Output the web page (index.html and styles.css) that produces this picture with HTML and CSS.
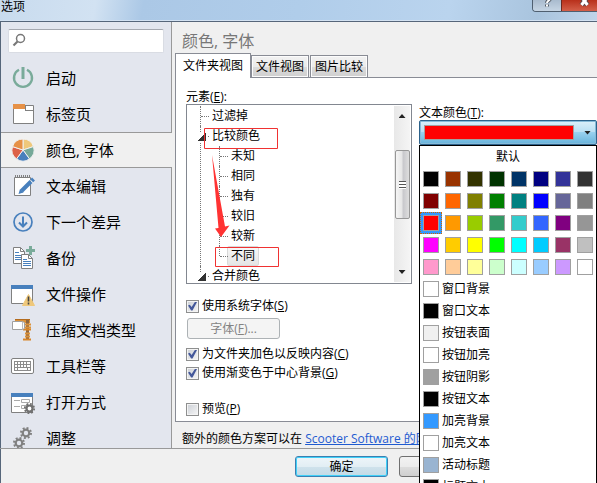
FILE: index.html
```
<!DOCTYPE html>
<html lang="zh-CN">
<head>
    <meta charset="UTF-8">
    <meta name="viewport" content="width=device-width, initial-scale=1.0">
    <title>选项</title>
    <link rel="stylesheet" href="styles.css">
</head>
<body>
    <div class="window">
        <header class="titlebar">
            <h1>选项</h1>
            <div class="caption-buttons">
                <button type="button" class="caption-help" aria-label="帮助">
                    <svg width="10" height="12" viewBox="0 0 10 12"><path d="M2 3.500a3 3 0 0 1 6 0C8 5.500 5.200 5.500 5 8M5 9.500v2" fill="none" stroke="#555c66" stroke-width="4"/><path d="M2 3.500a3 3 0 0 1 6 0C8 5.500 5.200 5.500 5 8M5 9.500v2" fill="none" stroke="#fff" stroke-width="2"/></svg>
                </button>
                <button type="button" class="caption-close" aria-label="关闭">
                    <svg width="14" height="12" viewBox="0 0 14 12"><path d="M3.500 2l6 8M9.500 2l-6 8" fill="none" stroke="#5b4448" stroke-width="5"/><path d="M3.500 2l6 8M9.500 2l-6 8" fill="none" stroke="#fff" stroke-width="3"/></svg>
                </button>
            </div>
        </header>

        <div class="content">
            <aside class="sidebar">
                <div class="search">
                    <svg width="14" height="14" viewBox="0 0 14 14"><circle cx="8.500" cy="5.500" r="4" fill="none" stroke="#777" stroke-width="1.500"/><path d="M5.500 8.500L1.500 12.500" stroke="#777" stroke-width="2.200"/></svg>
                    <input type="text" aria-label="搜索">
                </div>
                <nav>
                    <a href="#">
                        <svg viewBox="0 0 24 24"><path d="M8 3.800a9 9 0 1 0 8 0" fill="none" stroke="#7aab9a" stroke-width="2.400"/><path d="M12 1v12" stroke="#7aab9a" stroke-width="3"/></svg>
                        <span>启动</span>
                    </a>
                    <a href="#">
                        <svg viewBox="0 0 24 24"><path d="M2.500 3.500h20v18h-20z" fill="#fff" stroke="#808080"/><path d="M14 8.500h8M14.500 4v4" stroke="#808080"/><path d="M2 2h12v5H2z" fill="#e69147"/></svg>
                        <span>标签页</span>
                    </a>
                    <a href="#" class="active">
                        <svg viewBox="0 0 24 24"><g stroke="#f0f0f0"><path d="M12 12V1A11 11 0 0 1 22.460 8.600z" fill="#efc87b"/><path d="M12 12L22.460 8.600A11 11 0 0 1 18.470 20.900z" fill="#76a998"/><path d="M12 12L18.470 20.900A11 11 0 0 1 5.530 20.900z" fill="#4880bd"/><path d="M12 12L5.530 20.900A11 11 0 0 1 1.540 8.600z" fill="#dc6148"/><path d="M12 12L1.540 8.600A11 11 0 0 1 12 1z" fill="#e69147"/></g></svg>
                        <span>颜色, 字体</span>
                    </a>
                    <a href="#">
                        <svg viewBox="0 0 24 24"><path d="M3.500 3.500h16v18h-16z" fill="#fff" stroke="#808080"/><path d="M4 2.500h16" stroke="#808080" stroke-width="3" stroke-dasharray="1 1"/><path d="M10.500 17l9.500-9.500" stroke="#4880bd" stroke-width="4"/><path d="M20.500 7l2-2" stroke="#4880bd" stroke-width="4"/><path d="M7.500 20l1.500-5 3.500 3.500z" fill="#4880bd"/><path d="M19 5.700l3 3" stroke="#fff" stroke-width="0.800"/></svg>
                        <span>文本编辑</span>
                    </a>
                    <a href="#">
                        <svg viewBox="0 0 24 24"><circle cx="12" cy="12" r="9" fill="none" stroke="#4880bd" stroke-width="1.700"/><path d="M12 6.500v10M8 12.500l4 4 4-4" fill="none" stroke="#4880bd" stroke-width="2"/></svg>
                        <span>下一个差异</span>
                    </a>
                    <a href="#">
                        <svg viewBox="0 0 24 24"><path d="M2.500 1.500h7l4 4v12h-11z" fill="#fff" stroke="#808080"/><path d="M9.500 1.500v4h4" fill="none" stroke="#808080"/><path d="M4 6.500h4M4 9.500h6M4 11.500h6M4 13.500h6" stroke="#4880bd"/><path d="M10.500 8.500h7l4 4v10h-11z" fill="#fff" stroke="#808080"/><path d="M17.500 8.500v4h4" fill="none" stroke="#808080"/><path d="M12 13.500h4M12 15.500h8M12 17.500h8M12 19.500h8" stroke="#4880bd"/><path d="M19.500 0v9M15 4.500h9" stroke="#7aab9a" stroke-width="3"/></svg>
                        <span>备份</span>
                    </a>
                    <a href="#">
                        <svg viewBox="0 0 24 24"><path d="M0.500 3.500h21v18h-21z" fill="#fff" stroke="#808080"/><path d="M0 3h22v4H0z" fill="#4880bd"/><path d="M17.500 12.500L23.500 23.500h-12z" fill="#efc87b" stroke="#efc87b"/><path d="M17.500 14.500v5M17.500 20.500v2" stroke="#444" stroke-width="1.600"/></svg>
                        <span>文件操作</span>
                    </a>
                    <a href="#">
                        <svg viewBox="0 0 24 24"><path d="M4 1h15v4H4z" fill="#dc9138"/><path d="M4 1.500h15" stroke="#b36b1e"/><path d="M16.500 2v20" stroke="#8c6743" stroke-width="3"/><path d="M14 6.500h6M14 9.500h6M14 15.500h5M14 18.500h5" stroke="#dc9138" stroke-width="2"/><path d="M12 10.500h8v2h-8zM12 20.500h8v2h-8z" fill="#d98629"/><path d="M1.500 3.500h10l2 1v6l-2 1h-10z" fill="#fff" stroke="#a0a0a0"/><path d="M11.500 4v7" stroke="#bbb"/></svg>
                        <span>压缩文档类型</span>
                    </a>
                    <a href="#">
                        <svg viewBox="0 0 24 24"><rect x="0.500" y="4.500" width="22" height="15" rx="1.500" fill="#fff" stroke="#808080"/><path d="M3 7.500h17M3 10.500h17M3 13.500h17M3 16.500h17M3.500 7v10M6.500 7v6M9.500 7v6M12.500 7v6M15.500 7v6M19.500 7v10M6.500 13v4M16.500 13v4" stroke="#8c8c8c"/></svg>
                        <span>工具栏等</span>
                    </a>
                    <a href="#">
                        <svg viewBox="0 0 24 24"><path d="M0.500 3.500h21v19h-21z" fill="#fff" stroke="#808080"/><path d="M0 3h22v4H0z" fill="#4880bd"/><path d="M3 10.500h6M3 16.500h6M10.500 9.500h8v3h-8zM10.500 15.500h6v3h-6z" fill="none" stroke="#aaa"/><g fill="none" stroke="#707070"><circle cx="18.500" cy="18.500" r="3" fill="#fff" stroke-width="2.200"/><circle cx="18.500" cy="18.500" r="4.700" stroke-width="1.800" stroke-dasharray="1.850 1.840"/></g></svg>
                        <span>打开方式</span>
                    </a>
                    <a href="#">
                        <svg viewBox="0 0 24 24"><g fill="none" stroke="#808080"><circle cx="15" cy="7" r="3.300" stroke-width="2.200"/><circle cx="15" cy="7" r="5" stroke-width="2" stroke-dasharray="1.960 1.960"/><circle cx="8" cy="17" r="3.300" stroke-width="2.200"/><circle cx="8" cy="17" r="5" stroke-width="2" stroke-dasharray="1.960 1.960"/></g></svg>
                        <span>调整</span>
                    </a>
                </nav>
            </aside>

            <main class="page">
                <h2>颜色, 字体</h2>
                <div class="tabs" role="tablist">
                    <button type="button" role="tab" class="tab current" aria-selected="true">文件夹视图</button>
                    <button type="button" role="tab" class="tab">文件视图</button>
                    <button type="button" role="tab" class="tab">图片比较</button>
                </div>

                <div class="panel">
                    <div class="col-left">
                        <div class="label">元素(<u>E</u>):</div>
                        <div class="listbox">
                            <ul class="tree">
                                <li><span>过滤掉</span></li>
                                <li class="open"><span>比较颜色</span>
                                    <ul>
                                        <li><span>未知</span></li>
                                        <li><span>相同</span></li>
                                        <li><span>独有</span></li>
                                        <li><span>较旧</span></li>
                                        <li><span>较新</span></li>
                                        <li><span class="selected">不同</span></li>
                                    </ul>
                                </li>
                                <li class="open"><span>合并颜色</span></li>
                            </ul>
                            <div class="scrollbar">
                                <i class="arrow up"></i>
                                <div class="track"><div class="thumb"></div></div>
                                <i class="arrow down"></i>
                            </div>
                            <!-- red marks drawn over the tree -->
                            <svg class="marks" width="110" height="170" viewBox="0 0 110 170">
                                <g fill="none" stroke="#f03232"><path d="M17.500 23.500h73v20h-73zM28.500 142.500h63v19h-63z"/></g>
                                <path d="M25 50L38 121.500L42.500 120.500L34 132L28 123.500L31.500 123z" fill="#f33"/>
                            </svg>
                        </div>
                        <label class="check"><input type="checkbox" checked><span>使用系统字体(<u>S</u>)</span></label>
                        <button type="button" class="font-button" disabled>字体(<u>F</u>)...</button>
                        <label class="check"><input type="checkbox" checked><span>为文件夹加色以反映内容(<u>C</u>)</span></label>
                        <label class="check"><input type="checkbox" checked><span>使用渐变色于中心背景(<u>G</u>)</span></label>
                        <label class="check preview"><input type="checkbox"><span>预览(<u>P</u>)</span></label>
                    </div>

                    <div class="col-right">
                        <div class="label" id="color-label">文本颜色(<u>T</u>):</div>
                        <div class="picker">
                            <button type="button" class="picker-button" aria-labelledby="color-label" aria-expanded="true">
                                <span class="picker-value"></span>
                                <i class="arrow down"></i>
                            </button>
                            <div class="menu">
                                <button type="button" class="menu-default">默认</button>
                                <div class="grid" id="grid"></div>
                                <div id="system"></div>
                            </div>
                        </div>
                    </div>
                </div>

                <p class="more">额外的颜色方案可以在 <a href="#">Scooter Software 的网站</a></p>
            </main>
        </div>

        <footer class="footer">
            <button type="button" class="btn primary">确定</button>
            <button type="button" class="btn" aria-label="取消"></button>
        </footer>
    </div>

    <script>
        var colors = [
            '#000000', '#993300', '#333300', '#003300', '#003366', '#000080', '#333399', '#333333',
            '#800000', '#ff6600', '#808000', '#008000', '#008080', '#0000ff', '#666699', '#808080',
            '#ff0000', '#ff9900', '#99cc00', '#339966', '#33cccc', '#3366ff', '#800080', '#969696',
            '#ff00ff', '#ffcc00', '#ffff00', '#00ff00', '#00ffff', '#00ccff', '#993366', '#c0c0c0',
            '#ff99cc', '#ffcc99', '#ffff99', '#ccffcc', '#ccffff', '#99ccff', '#cc99ff', '#ffffff'
        ];
        var system = [
            ['窗口背景', '#ffffff'],
            ['窗口文本', '#000000'],
            ['按钮表面', '#f0f0f0'],
            ['按钮加亮', '#ffffff'],
            ['按钮阴影', '#a0a0a0'],
            ['按钮文本', '#000000'],
            ['加亮背景', '#3399ff'],
            ['加亮文本', '#ffffff'],
            ['活动标题', '#99b4d1'],
            ['标题文本', '#000000']
        ];
        var current = '#ff0000';

        function swatch(color){
            return '<span class="swatch" style="background:' + color + '"></span>';
        }

        document.getElementById('grid').innerHTML = colors.map(function(c){
            return '<button type="button" class="cell' + (c == current ? ' chosen' : '') + '" aria-label="' + c + '">' + swatch(c) + '</button>';
        }).join('');

        document.getElementById('system').innerHTML = system.map(function(s){
            return '<button type="button" class="system-color">' + swatch(s[1]) + s[0] + '</button>';
        }).join('');
    </script>
</body>
</html>
```
FILE: styles.css
```
* {
    box-sizing: border-box;
}
body {
    margin: 0;
    overflow: hidden;
    background: #f0f0f0;
    color: #000;
    font: 12px/16px "Open Sans", "Noto Sans CJK SC", sans-serif;
}
button, input {
    margin: 0;
    padding: 0;
    font: inherit;
    color: inherit;
}
h1, h2, p, ul {
    margin: 0;
    padding: 0;
    font-weight: 400;
    list-style: none;
}
.window {
    display: flex;
    flex-direction: column;
    height: 100vh;
}

/* title bar */
.titlebar {
    display: flex;
    justify-content: space-between;
    flex: none;
    height: 22px;
    border-bottom: 1px solid #56667a;
    box-shadow: inset 0 -1px #d3e2f2;
    background: linear-gradient(100deg, #c8dbee 0%, #d2e2f2 16%, #abc8e6 24%, #b0cdea 50%, #bad4ee 75%, #a9c4de 90%, #c0d5ea 100%);
}
.titlebar h1 {
    padding-left: 1px;
    font-size: 12px;
    line-height: 14px;
}
.caption-buttons {
    display: flex;
    height: 12px;
    border: 1px solid #4f5f70;
    border-width: 0 0 1px 1px;
    border-radius: 0 0 0 4px;
    overflow: hidden;
}
.caption-buttons button {
    display: flex;
    align-items: flex-end;
    justify-content: center;
    width: 28px;
    border: 0;
    background: linear-gradient(#a9bbce, #c6d5e4);
}
.caption-buttons svg {
    flex: none;
    margin-bottom: 4px;
}
.caption-buttons .caption-close {
    width: 36px;
    padding-left: 10px;
    border-left: 1px solid #6b2a22;
    background: linear-gradient(#b8301b, #d4604a);
}

.content {
    display: grid;
    grid-template-columns: 171px 1fr;
    flex: 1;
    min-height: 0;
    border-left: 1px solid #56667a;
}

/* sidebar */
.sidebar {
    overflow: hidden;
    background: linear-gradient(#999, #999) right / 1px 100% no-repeat #e3e6ee;
}
.search {
    display: flex;
    margin: 7px 8px 7px 7px;
    height: 24px;
    border: 1px solid #d9dce3;
    border-top-color: #a5a8af;
    border-radius: 2px;
    background: #fff;
}
.search svg {
    flex: none;
    margin: 3px;
}
.search input {
    flex: 1;
    min-width: 0;
    border: 0;
    outline: 0;
    background: none;
}
nav a {
    display: flex;
    align-items: center;
    gap: 11px;
    height: 36px;
    padding-left: 10px;
    color: #000;
    font-size: 15px;
    line-height: 20px;
    text-decoration: none;
}
nav a.active {
    border: 1px solid #999;
    border-width: 1px 0;
    background: #f0f0f0;
}
nav svg {
    flex: none;
    width: 24px;
    height: 24px;
}

/* page */
.page {
    min-width: 0;
    padding: 8px 0 0 3px;
}
.page h2 {
    padding-left: 7px;
    color: #777;
    font-size: 16px;
    line-height: 22px;
}
.tabs {
    display: flex;
    align-items: flex-end;
    position: relative;
    height: 25px;
}
.tab {
    height: 22px;
    margin-right: 1px;
    padding: 0 4px;
    border: 1px solid #898c95;
    border-bottom: 0;
    background: linear-gradient(#f2f2f2, #ebebeb 50%, #dcdcdc 51%, #cfcfcf);
    box-shadow: inset 0 0 0 1px #fcfcfc;
}
.tab.current {
    height: 25px;
    margin: 0 0 -1px;
    padding: 0 7px;
    background: #fff;
    box-shadow: none;
}
.panel {
    display: grid;
    grid-template-columns: 226px 1fr;
    gap: 7px;
    padding: 12px 0 4px 10px;
    border: 1px solid #898c95;
    border-right: 0;
    background: #fff;
}
.label {
    line-height: 14px;
}
.listbox {
    display: flex;
    position: relative;
    height: 180px;
    padding: 1px;
    border: 1px solid #828790;
    overflow: hidden;
}

/* tree */
.tree {
    flex: 1;
    padding-left: 12px;
}
.tree li {
    position: relative;
    padding-left: 7px;
    border-left: 1px dotted #777;
}
.tree ul {
    margin-left: 11px;
}
.tree span {
    display: inline-block;
    height: 20px;
    padding: 0 3px;
    border: 1px solid transparent;
    line-height: 18px;
    vertical-align: top;
}
.tree li::before {
    content: "";
    position: absolute;
    top: 10px;
    left: 0;
    width: 8px;
    border-top: 1px dotted #777;
}
.tree ul li:last-child {
    border-left-color: transparent;
}
.tree ul li:last-child::after {
    content: "";
    position: absolute;
    top: 0;
    left: -1px;
    height: 10px;
    border-left: 1px dotted #777;
}
.tree .open::after {
    content: "";
    position: absolute;
    top: 6px;
    left: -4px;
    width: 8px;
    height: 8px;
    border: 1px solid #fff;
    background: linear-gradient(135deg, #fff 50%, #333 50%);
}
.tree .selected {
    border-color: #d9d9d9;
    border-radius: 2px;
    background: linear-gradient(#f8f8f8, #e5e5e5);
}
.scrollbar {
    display: flex;
    flex-direction: column;
    justify-content: space-between;
    align-items: center;
    width: 16px;
    padding: 8px 0;
    background: linear-gradient(90deg, #e8e8e8, #f5f5f5);
}
.arrow {
    width: 7px;
    height: 4px;
    background: #222;
}
.arrow.up {
    clip-path: polygon(50% 0, 100% 100%, 0 100%);
}
.arrow.down {
    clip-path: polygon(0 0, 100% 0, 50% 100%);
}
.track {
    flex: 1;
    width: 15px;
    padding-top: 32px;
}
.thumb {
    display: flex;
    align-items: center;
    justify-content: center;
    height: 69px;
    border: 1px solid #979797;
    border-radius: 2px;
    background: linear-gradient(90deg, #f5f5f5, #e6e6e6 45%, #c8c8cc 55%, #dedede);
}
.thumb::before {
    content: "";
    width: 7px;
    height: 8px;
    background: repeating-linear-gradient(#555 0 1px, #fff 1px 3px);
}
.marks {
    position: absolute;
    top: 0;
    left: 0;
}

/* check boxes */
.check {
    display: flex;
    align-items: center;
    gap: 3px;
    height: 16px;
    margin-top: 3px;
}
.listbox + .check {
    margin-top: 14px;
}
.font-button + .check {
    margin-top: 7px;
}
.check.preview {
    margin-top: 20px;
}
.check input {
    display: grid;
    place-items: center;
    appearance: none;
    flex: none;
    width: 13px;
    height: 13px;
    border: 1px solid #8e8f8f;
    background: linear-gradient(135deg, #cbcfd5, #f6f6f6);
    box-shadow: inset 0 0 0 1px #f4f4f4;
}
.check input:checked::before {
    content: "";
    width: 9px;
    height: 9px;
    background: #44589a;
    clip-path: polygon(0 45%, 20% 35%, 40% 60%, 80% 0, 100% 5%, 50% 100%, 35% 100%);
}
.font-button {
    display: block;
    width: 93px;
    height: 21px;
    margin: 4px 0 0 1px;
    border: 1px solid #adb2b5;
    border-radius: 3px;
    background: #f4f4f4;
    color: #838383;
    line-height: 16px;
}

/* color picker */
.col-right {
    min-width: 0;
    padding-top: 16px;
}
.picker {
    position: relative;
}
.picker-button {
    display: flex;
    align-items: center;
    gap: 10px;
    width: 100%;
    height: 25px;
    padding: 0 5px 0 4px;
    border: 1px solid #2c628b;
    border-radius: 2px;
    background: linear-gradient(#dcf0fa, #b8dff3 49%, #98d1ef 50%, #68b3db);
    box-shadow: inset 0 0 0 1px #86bbd9;
}
.picker-value {
    flex: 1;
    height: 15px;
    border: 1px solid #a0a0a0;
    background: #f00;
}
.menu {
    position: absolute;
    top: 100%;
    left: 0;
    right: 0;
    border: 1px solid #000;
    background: #fff;
}
.menu button {
    border: 0;
    background: none;
}
.menu .menu-default {
    display: block;
    width: 100%;
    height: 22px;
}
.grid {
    display: grid;
    grid-template-columns: repeat(8, 1fr);
}
.cell, .system-color {
    display: flex;
    align-items: center;
    height: 22px;
    line-height: 16px;
}
.cell {
    justify-content: center;
}
.menu .chosen {
    background: #3399ff;
    outline: 1px dotted #cc6600;
    outline-offset: -1px;
}
.menu .system-color {
    gap: 3px;
    width: 100%;
    padding-left: 3px;
}
.swatch {
    flex: none;
    width: 16px;
    height: 16px;
    border: 1px solid #a0a0a0;
}

.more {
    padding: 9px 0 0 7px;
    white-space: nowrap;
}
.more a {
    color: #1f5bd0;
}

/* bottom buttons */
.footer {
    display: flex;
    justify-content: flex-end;
    gap: 11px;
    flex: none;
    height: 35px;
    padding: 7px 105px 0 0;
    border: solid #999;
    border-width: 1px 0 0;
    box-shadow: inset 1px 0 #56667a;
}
.btn {
    width: 93px;
    height: 21px;
    border: 1px solid #707070;
    border-radius: 3px;
    background: linear-gradient(#f2f2f2, #ebebeb 50%, #dddddd 51%, #cfcfcf);
    line-height: 16px;
}
.btn.primary {
    border-color: #3c7fb1;
    box-shadow: inset 0 0 0 1px #40d0f8;
    background: linear-gradient(#eef5f9, #e2eef4 50%, #cfe2ec 51%, #c3dae6);
}
```
